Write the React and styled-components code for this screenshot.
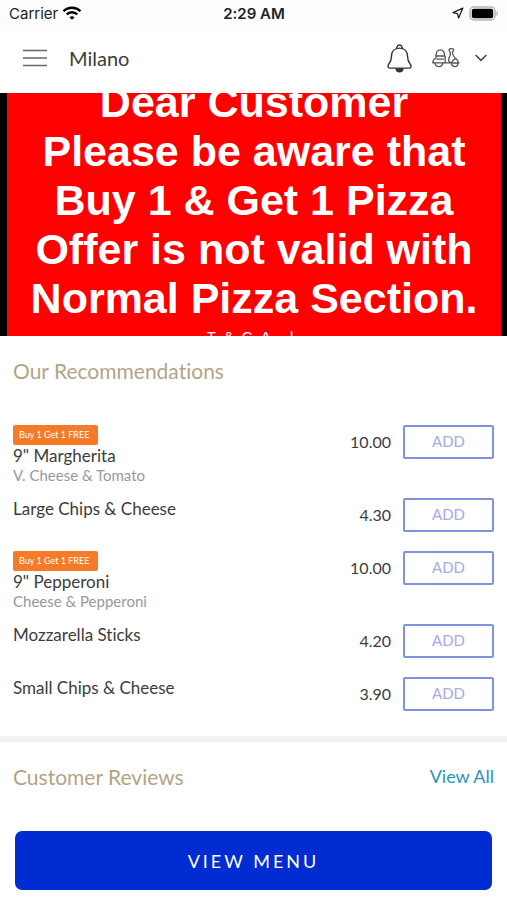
import React from 'react'
import { useState } from 'react'
import styled, { createGlobalStyle } from 'styled-components'

const items = [
    { id: 1, name: '9" Margherita', detail: 'V. Cheese & Tomato', price: '10.00', offer: 'Buy 1 Get 1 FREE' },
    { id: 2, name: 'Large Chips & Cheese', price: '4.30' },
    { id: 3, name: '9" Pepperoni', detail: 'Cheese & Pepperoni', price: '10.00', offer: 'Buy 1 Get 1 FREE' },
    { id: 4, name: 'Mozzarella Sticks', price: '4.20' },
    { id: 5, name: 'Small Chips & Cheese', price: '3.90' },
]

const WifiIcon = () => (
    <svg width="20" height="14" viewBox="0 0 20 14" fill="none" stroke="#000" strokeWidth="2.5" aria-hidden="true">
        <path d="M1.5 5.2C6.2.6 13.8.6 18.5 5.2" />
        <path d="M4.7 8.4c3-2.9 7.6-2.9 10.6 0" />
        <path d="M10 13.8 7.400 11.2c1.500-1.300 3.700-1.300 5.200 0z" fill="#000" stroke="none" />
    </svg>
)

const LocationIcon = () => (
    <svg width="12" height="12" viewBox="0 0 12 12" fill="none" stroke="#222" strokeWidth="1.3" strokeLinejoin="round" aria-hidden="true">
        <path d="M10.8 1.2 1 5.600l4.400 1 1.200 4.400z" />
    </svg>
)

const BatteryIcon = () => (
    <svg width="30" height="15" viewBox="0 0 30 15" aria-hidden="true">
        <rect x="1" y="1" width="25" height="13" rx="4" fill="#fff" stroke="#b5b5b5" strokeWidth="1.5" />
        <rect x="2.800" y="2.800" width="21.400" height="9.400" rx="2" fill="#000" />
        <path d="M27.500 5c2 .8 2 4.200 0 5z" fill="#b5b5b5" />
    </svg>
)

const MenuIcon = () => (
    <svg width="24" height="18" viewBox="0 0 24 18" stroke="#666" strokeWidth="1.5" aria-hidden="true">
        <path d="M0 1.500h24M0 9h24M0 16.500h24" />
    </svg>
)

const BellIcon = () => (
    <svg width="25" height="29" viewBox="0 0 26 30" fill="none" stroke="#333" strokeWidth="1.500" strokeLinejoin="round" aria-hidden="true">
        <path d="M9.800 4.800 10.400 3C10.800 1.700 11.800 1 13 1s2.200.7 2.600 2l.6 1.800" />
        <path d="M13 4.200c-5.300 0-8.400 3.700-8.400 8.800 0 4.200-.9 5.700-2.500 7.500-1.700 1.900-1.400 4.500.9 4.500h20c2.300 0 2.600-2.600.9-4.500-1.600-1.800-2.500-3.300-2.500-7.500 0-5.100-3.100-8.800-8.400-8.800z" />
        <path d="M9.500 26h7c-.4 1.800-1.700 2.800-3.500 2.800s-3.100-1-3.500-2.800z" fill="#333" />
    </svg>
)

const ScooterIcon = () => (
    <svg width="28" height="20" viewBox="0 0 28 20" fill="none" stroke="#555" strokeWidth="1.300" strokeLinecap="round" strokeLinejoin="round" aria-hidden="true">
        <path d="M4 8C4 4 5.600 1.800 8.300 1.800S12.600 4 12.600 8z" />
        <path d="M4 8v1.800C2 11 .8 12.600.8 14.800h12.400V8.500" />
        <path d="M4.800 11.200h6.600M3 14.800c.3 2.300 1.800 3.800 3.900 3.800s3.600-1.500 3.900-3.800" />
        <path d="M13.200 14.800h6.600M17.200 1.200c1-.6 3-.6 4.200 0 .6 1-.2 2-1 2.800 0 2 .7 3.700 2.200 5.400 1.700 1.800 3.600 3 4.200 5.600h-6.600c-2.600-.2-4-1.800-3.400-4.200.5-2.200 1.800-3.400 1.600-5.400-.1-1.400-1.600-2.400-1.200-4.200z" />
        <path d="M19.400 14.800c1-2.200 2.400-3.400 4.200-4.200M19.400 16c.6 1.800 1.800 2.600 3.400 2.600 2 0 3.200-1.400 3.400-3.600" />
    </svg>
)

const ChevronIcon = () => (
    <svg width="12" height="8" viewBox="0 0 12 8" fill="none" stroke="#444" strokeWidth="1.500" aria-hidden="true">
        <path d="m.6 1 5.400 5.400L11.400 1" />
    </svg>
)

const App = () => {
    const [basket, setBasket] = useState([])

    const addItem = (id) => {
        setBasket((prev) => [...prev, id])
    }

    return (
        <>
            <GlobalStyle />
            <Page>
                <StatusBar>
                    <Carrier>Carrier <WifiIcon /></Carrier>
                    <Clock>2:29 AM</Clock>
                    <StatusIcons>
                        <LocationIcon />
                        <BatteryIcon />
                    </StatusIcons>
                </StatusBar>
                <Header>
                    <IconButton aria-label="Menu"><MenuIcon /></IconButton>
                    <h1>Milano</h1>
                    <IconButton aria-label="Notifications"><BellIcon /></IconButton>
                    <IconButton aria-label="Order type">
                        <ScooterIcon />
                        <ChevronIcon />
                    </IconButton>
                </Header>
                <Banner>
                    <Notice>
                        <p>
                            Dear Customer<br />
                            Please be aware that<br />
                            Buy 1 &amp; Get 1 Pizza<br />
                            Offer is not valid with<br />
                            Normal Pizza Section.
                        </p>
                        <small>T&amp;CA l</small>
                    </Notice>
                </Banner>
                <main>
                    <SectionHead>
                        <h2>Our Recommendations</h2>
                    </SectionHead>
                    <List>
                        {items.map((item) => (
                            <Item key={item.id}>
                                <Info>
                                    {item.offer && <Offer>{item.offer}</Offer>}
                                    <h3>{item.name}</h3>
                                    {item.detail && <p>{item.detail}</p>}
                                </Info>
                                <Price>{item.price}</Price>
                                <AddButton
                                    aria-label={`ADD ${item.name}`}
                                    onClick={() => addItem(item.id)}
                                >ADD</AddButton>
                            </Item>
                        ))}
                    </List>
                    <Divider />
                    <SectionHead>
                        <h2>Customer Reviews</h2>
                        <a href="#reviews">View All</a>
                    </SectionHead>
                </main>
                <Footer>
                    <ViewMenu data-count={basket.length}>VIEW MENU</ViewMenu>
                </Footer>
            </Page>
        </>
    )
}

export default App

const GlobalStyle = createGlobalStyle`
    * {
        box-sizing: border-box;
    }
    body {
        margin: 0;
        background: #fff;
        color: #3c3c3c;
        font-family: Lato, "Liberation Sans", sans-serif;
        font-variant-ligatures: none;
    }
    h1, h2, h3, p, ul {
        margin: 0;
        padding: 0;
        font-weight: 400;
    }
    button {
        font-family: inherit;
        cursor: pointer;
    }
`

const Page = styled.div`
    min-height: 100vh;
    display: flex;
    flex-direction: column;
`

const StatusBar = styled.div`
    display: grid;
    grid-template-columns: 1fr auto 1fr;
    align-items: center;
    height: 26px;
    padding: 0 8px 0 9px;
    background: #fdfdfd;
    color: #222;
    font-family: Inter, "Liberation Sans", sans-serif;
    font-size: 15px;
`

const Carrier = styled.span`
    display: flex;
    align-items: center;
    gap: 4px;
`

const Clock = styled.span`
    font-weight: 600;
`

const StatusIcons = styled.span`
    display: flex;
    align-items: center;
    justify-content: flex-end;
    gap: 5px;
`

const Header = styled.header`
    display: flex;
    align-items: center;
    height: 67px;
    padding: 0 20px 3px 23px;

    h1 {
        flex: 1;
        margin-left: 22px;
        font-size: 20px;
        line-height: 22px;
    }
`

const IconButton = styled.button`
    display: flex;
    align-items: center;
    gap: 15px;
    padding: 0;
    border: 0;
    background: none;

    & + & {
        margin-left: 20px;
    }
`

const Banner = styled.section`
    height: 243px;
    padding: 0 6px 0 7px;
    overflow: hidden;
    background: #000;
`

const Notice = styled.div`
    display: flex;
    flex-direction: column;
    justify-content: center;
    align-items: center;
    height: 100%;
    background: #fe0000;
    color: #fff;
    font-family: "Liberation Sans", Arial, sans-serif;
    text-align: center;
    white-space: nowrap;

    p {
        font-size: 43px;
        font-weight: 700;
        line-height: 49px;
    }
    small {
        font-size: 15px;
        line-height: 28px;
        letter-spacing: 8px;
    }
`

const SectionHead = styled.div`
    display: flex;
    align-items: center;
    justify-content: space-between;
    height: 68px;
    padding: 0 13px;

    h2 {
        color: #b3a584;
        font-size: 21px;
    }
    a {
        color: #2b93bd;
        font-size: 18px;
        text-decoration: none;
    }
`

const List = styled.ul`
    padding: 21px 13px 6px;
    list-style: none;
`

const Item = styled.li`
    display: flex;
    align-items: flex-start;
    padding-bottom: 14px;
`

const Info = styled.div`
    flex: 1;

    h3 {
        font-size: 17px;
        line-height: 21px;
    }
    p {
        color: #999;
        font-size: 15px;
        line-height: 18px;
    }
`

const Offer = styled.span`
    display: block;
    width: fit-content;
    padding: 0 9px 0 6px;
    border-radius: 2px;
    background: #f57b29;
    color: #fff;
    font-size: 9px;
    line-height: 20px;
`

const Price = styled.span`
    margin-right: 12px;
    font-size: 16px;
    line-height: 34px;
`

const AddButton = styled.button`
    width: 91px;
    height: 34px;
    margin-bottom: 5px;
    padding: 0 0 2px;
    border: 2px solid #8093dd;
    border-radius: 2px;
    background: #fff;
    color: #a6a9ea;
    font-size: 15px;
`

const Divider = styled.hr`
    height: 6px;
    margin: 0;
    border: 0;
    background: #f2f2f2;
`

const Footer = styled.footer`
    margin-top: auto;
    padding: 0 15px 10px;
`

const ViewMenu = styled.button`
    width: 100%;
    height: 59px;
    border: 0;
    border-radius: 7px;
    background: #002cd2;
    color: #fff;
    font-size: 18px;
    letter-spacing: 3px;
`
